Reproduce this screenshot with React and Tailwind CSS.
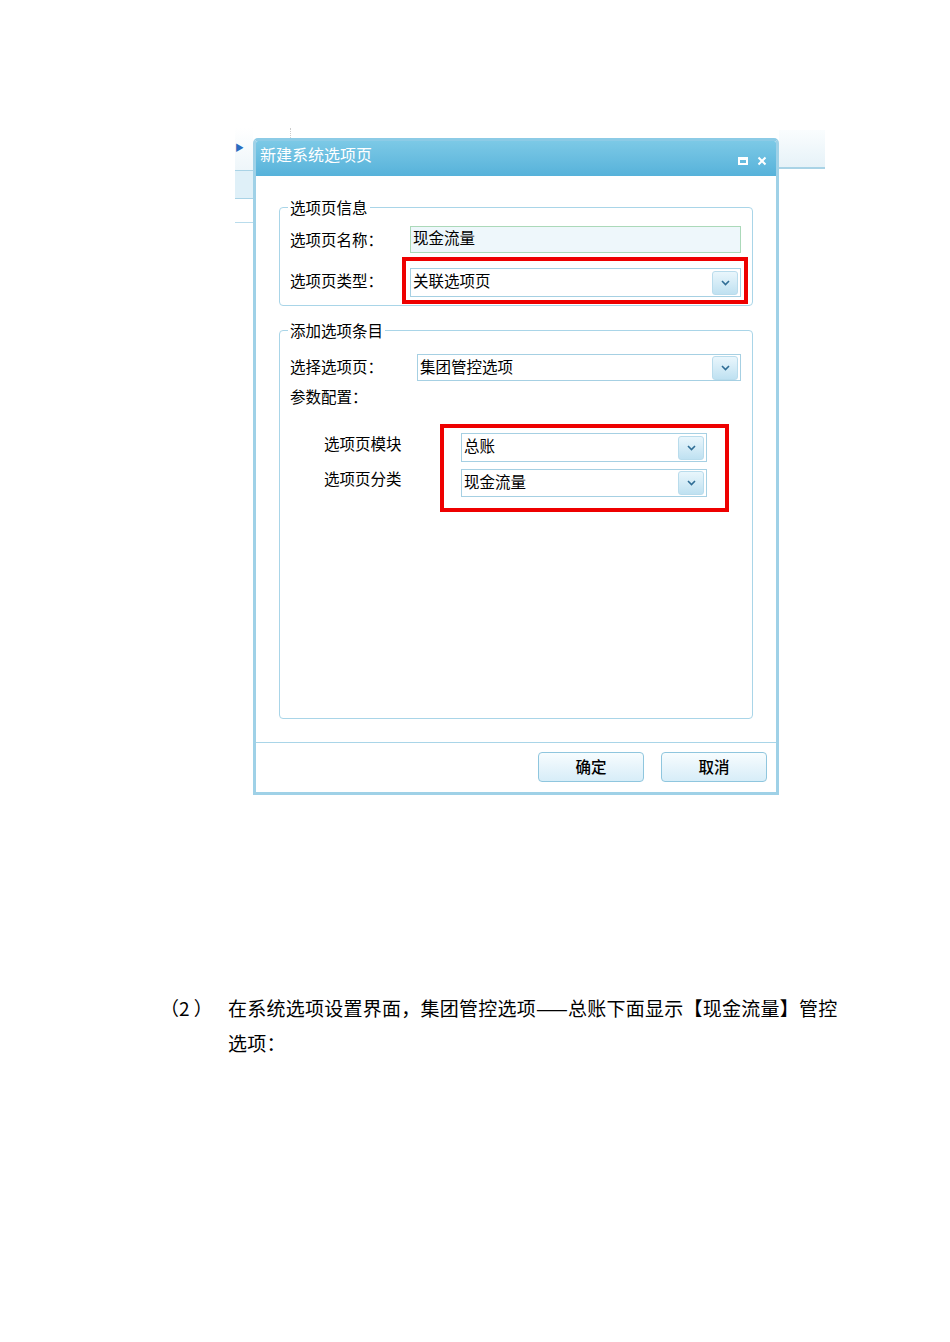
const ui = { fontFamily: '"Noto Sans CJK SC", "Noto Sans", sans-serif' }

function Chevron() {
  return (
    <span className="flex h-[24px] w-[26px] items-center justify-center rounded-[3px] border border-[#b9dcec] bg-gradient-to-b from-[#e9f6fc] to-[#bfe1f1]">
      <svg width="9" height="6" viewBox="0 0 9 6">
        <path d="M1 1 L4.5 4.5 L8 1" fill="none" stroke="#2f6d95" strokeWidth="1.6" />
      </svg>
    </span>
  )
}

function Select({ value, className = '' }) {
  return (
    <div className={`flex items-start justify-between border border-[#a6d0e3] bg-white pl-[2px] pr-[2px] ${className}`}>
      <span className="mt-[1px] text-[15.5px] leading-[20px] text-black">{value}</span>
      <span className="self-center">
        <Chevron />
      </span>
    </div>
  )
}

function Field({ legend, className = '', children }) {
  return (
    <fieldset className={`mx-[23px] rounded-[4px] border border-[#a9d5e8] ${className}`}>
      <legend className="ml-[8px] px-[2px] text-[15.5px] leading-[17px] text-black">{legend}</legend>
      {children}
    </fieldset>
  )
}

export default function App() {
  return (
    <div className="min-h-[1342px] bg-white" style={ui}>
      {/* 截图区域 */}
      <div className="ml-[235px] flex items-start pt-[128px]">
        {/* 左侧背景窗口 */}
        <div className="w-[18px]">
          <div className="flex h-[42px] items-start bg-gradient-to-b from-white to-[#eef6fa] pt-[15px]">
            <span className="text-[9px] leading-none text-[#2a6cc0]">▶</span>
          </div>
          <div className="h-[28px] border-t border-[#a9d3e6] bg-[#dff0f8]" />
          <div className="h-[24px] border-t border-[#a9d3e6] bg-white" />
          <div className="h-[2px] border-t border-[#b9dcec]" />
        </div>

        <div className="w-[526px]">
          <div className="h-[10px] pl-[37px]">
            <div className="h-full w-0 border-l border-dotted border-[#cccccc]" />
          </div>

          {/* 对话框 */}
          <div className="overflow-hidden rounded-t-[5px] border-[3px] border-[#9fd1e7] border-t-[#8ccbe6]">
            <div className="flex h-[35px] items-start justify-between bg-gradient-to-b from-[#7cc9e6] to-[#56b2da] pl-[4px] pr-[9px] pt-[2px]">
              <span className="text-[16px] leading-[22px] text-white">新建系统选项页</span>
              <div className="mt-[13px] flex items-center gap-[9px]">
                <span className="h-[8px] w-[10px] border-2 border-t-[3px] border-white" />
                <svg width="10" height="10" viewBox="0 0 10 10">
                  <path d="M1.5 1.5 L8.5 8.5 M8.5 1.5 L1.5 8.5" stroke="white" strokeWidth="2" />
                </svg>
              </div>
            </div>

            <div className="h-[566px] bg-white pt-[23px]">
              <Field legend="选项页信息" className="h-[107px]">
                <div className="pl-[10px] pr-[11px]">
                  <div className="mt-[10px] flex h-[27px] items-center">
                    <span className="w-[120px] text-[15.5px] text-black">选项页名称：</span>
                    <div className="flex h-[27px] flex-1 items-start border border-[#abd9b9] bg-[#eef7fb] pl-[2px]">
                      <span className="text-[15.5px] leading-[20px] text-black">现金流量</span>
                    </div>
                  </div>
                  <div className="mt-[4px] flex items-center">
                    <span className="w-[112px] text-[15.5px] text-black">选项页类型：</span>
                    <div className="-mr-[7px] flex-1 border-4 border-[#ee0000] pb-[3px] pl-[4px] pr-[3px] pt-[7px]">
                      <Select value="关联选项页" className="h-[29px]" />
                    </div>
                  </div>
                </div>
              </Field>

              <Field legend="添加选项条目" className="mt-[16px] h-[397px]">
                <div className="pl-[10px] pr-[11px]">
                  <div className="mt-[15px] flex items-center">
                    <span className="w-[127px] self-start pt-[2px] text-[15.5px] leading-[20px] text-black">选择选项页：</span>
                    <Select value="集团管控选项" className="h-[27px] flex-1" />
                  </div>
                  <div className="mt-[5px] text-[15.5px] leading-[20px] text-black">参数配置：</div>
                  <div className="mt-[18px] flex">
                    <div className="flex w-[150px] flex-col gap-[7px] pl-[34px] pt-[5px]">
                      <span className="flex h-[29px] items-center text-[15.5px] text-black">选项页模块</span>
                      <span className="flex h-[28px] items-center text-[15.5px] text-black">选项页分类</span>
                    </div>
                    <div className="mr-[12px] flex flex-1 flex-col gap-[7px] border-4 border-[#ee0000] pb-[11px] pl-[17px] pr-[18px] pt-[5px]">
                      <Select value="总账" className="h-[29px]" />
                      <Select value="现金流量" className="h-[28px]" />
                    </div>
                  </div>
                </div>
              </Field>
            </div>

            <div className="flex h-[50px] justify-end gap-[17px] border-t border-[#a9d5e8] bg-white pr-[9px] pt-[9px]">
              {['确定', '取消'].map(t => (
                <button
                  key={t}
                  className="h-[30px] w-[106px] rounded-[4px] border border-[#8fc6de] bg-gradient-to-b from-[#f7fcfe] to-[#d7edf8] text-[15.5px] font-medium text-black"
                >
                  {t}
                </button>
              ))}
            </div>
          </div>
        </div>

        {/* 右侧背景窗口 */}
        <div className="w-[46px] pt-[2px]">
          <div className="h-[39px] border-b-2 border-[#a9d3e6] bg-gradient-to-b from-[#fafdfe] to-[#e6f2f8]" />
        </div>
      </div>

      {/* 正文 */}
      <div className="ml-[160px] mt-[195px] flex text-[19px] leading-[35px] text-black" style={{ fontFamily: '"Noto Sans CJK SC", serif' }}>
        <span className="w-[68px] shrink-0">（2 ）</span>
        <p className="tracking-[0.25px]">
          在系统选项设置界面，集团管控选项——总账下面显示【现金流量】管控
          <br />
          选项：
        </p>
      </div>
    </div>
  )
}
